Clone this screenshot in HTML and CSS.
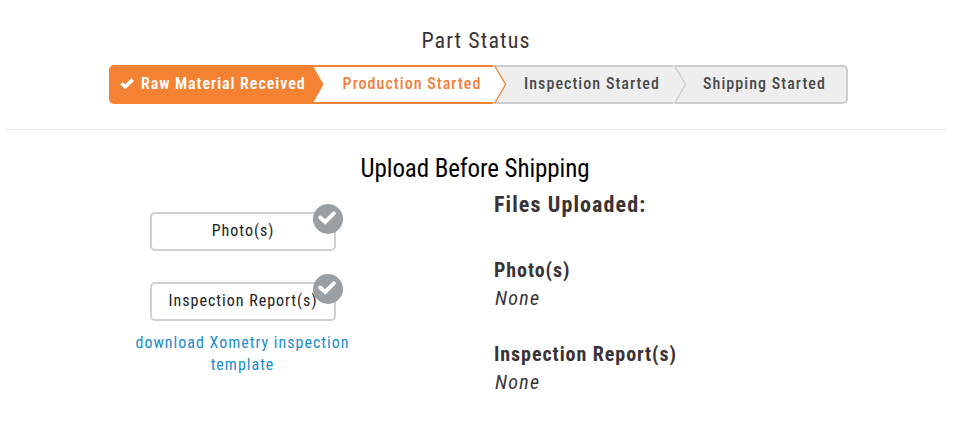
FILE: index.html
```html
<!DOCTYPE html>
<html lang="en">
<head>
<meta charset="utf-8">
<title>Part Status</title>
<link rel="stylesheet" href="styles.css">
</head>
<body>
<section class="status">
  <h2 class="status-title"><span class="t">Part Status</span></h2>
  <ol class="steps">
    <li class="step done">
      <svg class="tick" viewBox="0 0 14 11"><path d="M1.3 5.2 5.2 8.8 12.7 1.6" fill="none" stroke="#fff" stroke-width="3.6"/></svg>
      <span class="t">Raw Material Received</span>
      <svg class="arrow" viewBox="0 0 14 39"><path d="M0 1 10.5 19.5 0 38Z" fill="#f58232"/></svg>
    </li>
    <li class="step current"><span class="t">Production Started</span>
      <svg class="arrow" viewBox="0 0 14 39"><path d="M0 0H1.5L13 19.5 1.5 39H0Z" fill="#fff"/><path d="M1.5 0.5 12.5 19.5 1.5 38.5" fill="none" stroke="#f58232" stroke-width="1.3"/></svg>
    </li>
    <li class="step"><span class="t">Inspection Started</span>
      <svg class="arrow" viewBox="0 0 14 39"><path d="M0 0H1.5L13 19.5 1.5 39H0Z" fill="#eee"/><path d="M1.5 0.5 12.5 19.5 1.5 38.5" fill="none" stroke="#ccc" stroke-width="1.3"/></svg>
    </li>
    <li class="step last"><span class="t">Shipping Started</span></li>
  </ol>
</section>
<section class="upload">
  <h2 class="upload-title"><span class="t">Upload Before Shipping</span></h2>
  <div class="columns">
    <div class="actions">
      <button class="pick"><span class="t">Photo(s)</span>
        <svg class="badge" viewBox="0 0 30 30"><circle cx="15" cy="15" r="15" fill="#9a9fa3"/><path d="M7.2 13.5 12.2 18 20.8 9.4" fill="none" stroke="#fff" stroke-width="4" stroke-linecap="round"/></svg>
      </button>
      <button class="pick"><span class="t">Inspection Report(s)</span>
        <svg class="badge" viewBox="0 0 30 30"><circle cx="15" cy="15" r="15" fill="#9a9fa3"/><path d="M7.2 13.5 12.2 18 20.8 9.4" fill="none" stroke="#fff" stroke-width="4" stroke-linecap="round"/></svg>
      </button>
      <a class="template"><span class="t">download Xometry inspection</span><span class="t">template</span></a>
    </div>
    <div class="files">
      <h3><span class="t">Files Uploaded:</span></h3>
      <h4><span class="t">Photo(s)</span></h4>
      <p><span class="t">None</span></p>
      <h4><span class="t">Inspection Report(s)</span></h4>
      <p><span class="t">None</span></p>
    </div>
  </div>
</section>
</body>
</html>
```

FILE: styles.css
```css
* { box-sizing: border-box; margin: 0; padding: 0; }
body {
  width: 974px; height: 439px; overflow: hidden; background: #fff; color: #3a3335;
  font-family: "Roboto Condensed", Roboto, sans-serif; font-stretch: 75%;
  font-size: 16px; letter-spacing: 1px;
}
.t { white-space: nowrap; }
.status { width: 942px; height: 130px; margin-left: 5px; padding-top: 27px; border-bottom: 1px solid #e9e9e9; }
.status-title { font-size: 22px; font-weight: 400; line-height: 28px; text-align: center; letter-spacing: 1.1px; }
.steps { display: flex; width: 739px; margin: 10px 0 0 104px; list-style: none; }
.step {
  position: relative; display: flex; align-items: center; justify-content: center;
  width: 180px; height: 39px; padding: 0 0 3px 18px; background: #eee;
  border: 2px solid #ccc; border-width: 2px 0; color: #4a4a4a; font-weight: 460; letter-spacing: 1.05px;
}
.done { width: 204px; padding-left: 11px; gap: 7px; justify-content: flex-start; background: #f58232; border-color: #f58232; color: #fff; border-radius: 5px 0 0 5px; font-weight: 650; letter-spacing: 0.95px; }
.current { background: #fff; border-color: #f58232; color: #f47c3c; }
.last { width: 175px; padding-left: 10px; border-right-width: 2px; border-radius: 0 5px 5px 0; }
.tick { width: 14px; height: 11px; }
.arrow { position: absolute; z-index: 1; left: 100%; top: -2px; width: 14px; height: 39px; }
.upload { padding-top: 23px; }
.upload-title { width: 950px; font-size: 25px; line-height: 32px; font-weight: 400; color: #000; text-align: center; letter-spacing: -0.1px; }
.columns { display: flex; }
.actions { width: 484px; padding: 27px 0 0 135px; }
.pick {
  position: relative; display: block; width: 186px; height: 39px; margin: 0 0 31px 15px; padding-bottom: 3px;
  background: #fff; border: 2px solid #d0d0d0; border-radius: 5px; color: #222;
  font: inherit; font-weight: 430; letter-spacing: 1px;
}
.badge { position: absolute; right: -9px; top: -10px; width: 30px; height: 30px; }
.template { display: flex; flex-direction: column; align-items: center; width: 215px; margin-top: -20px; color: #1b8dcc; line-height: 22px; font-weight: 440; }
.files { padding: 6px 0 0 10px; font-size: 20px; line-height: 28px; }
.files h3 { font-size: 22px; margin-bottom: 37px; letter-spacing: 1.1px; }
.files h4 { font-size: 20px; letter-spacing: 0.93px; }
.files p { padding-left: 1px; font-style: italic; letter-spacing: 1.3px; margin-bottom: 28px; }
```
